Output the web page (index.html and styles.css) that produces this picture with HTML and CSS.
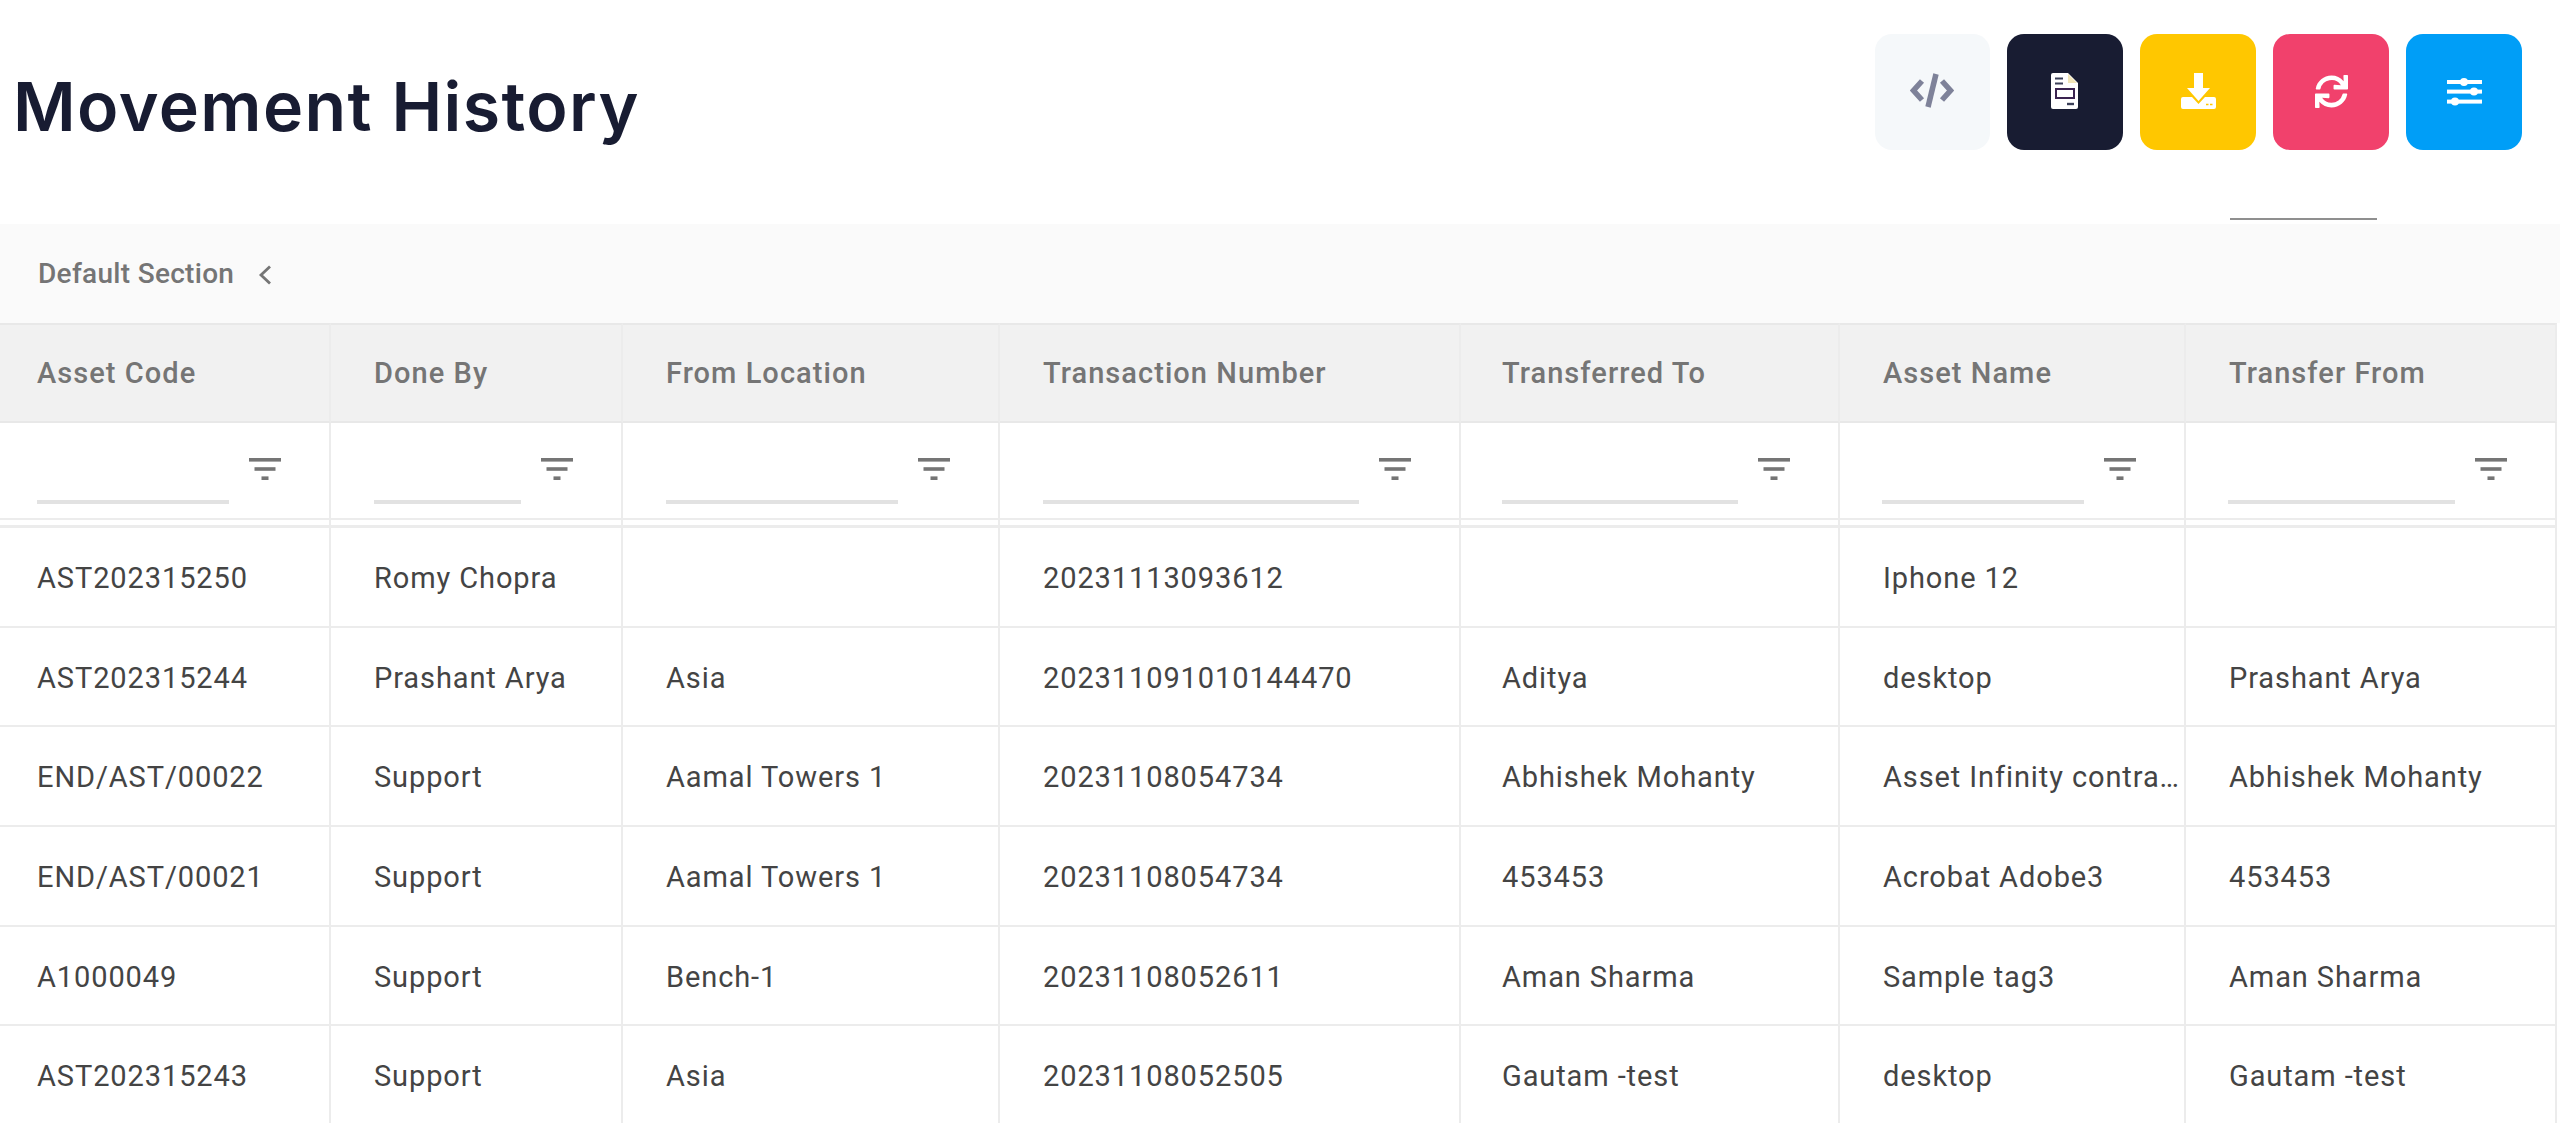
FILE: index.html
```html
<!DOCTYPE html>
<html lang="en">
<head>
<meta charset="utf-8">
<title>Movement History</title>
<link rel="stylesheet" href="styles.css">
</head>
<body>
<svg class="defs" width="0" height="0" aria-hidden="true">
  <symbol id="filter" viewBox="0 0 32 22">
    <rect x="0" y="0" width="32" height="3.6"/>
    <rect x="5.5" y="9.2" width="21" height="3.6"/>
    <rect x="12.5" y="18.4" width="7" height="3.6"/>
  </symbol>
</svg>
<header class="page-head">
  <h1 class="title">Movement History</h1>
  <div class="actions">
    <div class="btn-row">
      <button class="btn btn-light" type="button" aria-label="Code">
        <svg class="ico-code" viewBox="0 0 44 35"><path d="M12 8 3.500 17.500 12 27M32 8l8.500 9.500L32 27" fill="none" stroke="#7e8299" stroke-width="5.500"/><path d="M26 1 18 34" fill="none" stroke="#7e8299" stroke-width="5.500"/></svg>
      </button>
      <button class="btn btn-dark" type="button" aria-label="Document">
        <svg class="ico-doc" viewBox="0 0 27 36"><path d="M2 0h15l10 10v24a2 2 0 0 1-2 2H2a2 2 0 0 1-2-2V2a2 2 0 0 1 2-2z" fill="#fff"/><path d="M17 1v9h9z" fill="#f2e6b8"/><path d="M4 5.500h8M4 10.500h8" stroke="#3a3f58" stroke-width="2"/><rect x="5" y="16" width="18" height="9" fill="#fff" stroke="#3a2350" stroke-width="2"/><path d="M16 31h7" stroke="#3a3f58" stroke-width="2.400"/></svg>
      </button>
      <button class="btn btn-yellow" type="button" aria-label="Download">
        <svg class="ico-down" viewBox="0 0 35 36"><path d="M13 0h9v15h7L17.500 28 6 15h7z" fill="#fff"/><path d="M2 24h9l6.500 7 6.500-7h9a2 2 0 0 1 2 2v8a2 2 0 0 1-2 2H2a2 2 0 0 1-2-2v-8a2 2 0 0 1 2-2z" fill="#fff"/><path d="M25 31.500h2.500M29 31.500h2.500" stroke="#ffc700" stroke-width="1.600"/></svg>
      </button>
      <button class="btn btn-pink" type="button" aria-label="Refresh">
        <svg class="ico-sync" viewBox="0 0 512 512"><path fill="#fff" d="M440.65 12.57l4 82.77A247.16 247.16 0 0 0 255.83 8C134.73 8 33.91 94.92 12.29 209.82A12 12 0 0 0 24.09 224h49.05a12 12 0 0 0 11.67-9.26 175.91 175.91 0 0 1 317-56.94l-101.46-4.86a12 12 0 0 0-12.57 12v47.41a12 12 0 0 0 12 12H500a12 12 0 0 0 12-12V12a12 12 0 0 0-12-12h-47.37a12 12 0 0 0-11.98 12.57zM255.83 432a175.61 175.61 0 0 1-146-77.8l101.8 4.87a12 12 0 0 0 12.57-12v-47.4a12 12 0 0 0-12-12H12a12 12 0 0 0-12 12V500a12 12 0 0 0 12 12h47.35a12 12 0 0 0 12-12.6l-4.15-82.57A247.17 247.17 0 0 0 255.83 504c121.11 0 221.93-86.92 243.55-201.82a12 12 0 0 0-11.8-14.18h-49.05a12 12 0 0 0-11.67 9.26A175.86 175.86 0 0 1 255.83 432z"/></svg>
      </button>
      <button class="btn btn-blue" type="button" aria-label="Settings">
        <svg class="ico-sliders" viewBox="0 0 35 29"><g fill="#fff"><rect x="0" y="3" width="35" height="4"/><circle cx="17" cy="5" r="4"/><rect x="0" y="12.600" width="35" height="4"/><circle cx="27" cy="14.600" r="4"/><rect x="0" y="22.600" width="35" height="4"/><circle cx="8" cy="24.600" r="4"/></g></svg>
      </button>
    </div>
    <div class="tab-line"></div>
  </div>
</header>

<section class="section-bar">
  <span class="section-name">Default Section</span>
  <svg class="chev" viewBox="0 0 14 20"><path d="M12 1.500 3 10l9 8.500" fill="none" stroke="#757575" stroke-width="2.800"/></svg>
</section>

<table class="grid">
  <colgroup>
    <col class="c1"><col class="c2"><col class="c3"><col class="c4"><col class="c5"><col class="c6"><col class="c7">
  </colgroup>
  <thead>
    <tr class="head-row">
      <th class="first">Asset Code</th><th>Done By</th><th>From Location</th><th>Transaction Number</th><th class="tight">Transferred To</th><th>Asset Name</th><th>Transfer From</th>
    </tr>
    <tr class="filter-row">
      <td class="first"><div class="fl"><span class="fl-input"></span><svg class="fl-ico"><use href="#filter"/></svg></div></td>
      <td><div class="fl"><span class="fl-input"></span><svg class="fl-ico"><use href="#filter"/></svg></div></td>
      <td><div class="fl"><span class="fl-input"></span><svg class="fl-ico"><use href="#filter"/></svg></div></td>
      <td><div class="fl"><span class="fl-input"></span><svg class="fl-ico"><use href="#filter"/></svg></div></td>
      <td class="tight"><div class="fl"><span class="fl-input"></span><svg class="fl-ico"><use href="#filter"/></svg></div></td>
      <td class="near"><div class="fl"><span class="fl-input"></span><svg class="fl-ico"><use href="#filter"/></svg></div></td>
      <td class="near"><div class="fl"><span class="fl-input"></span><svg class="fl-ico"><use href="#filter"/></svg></div></td>
    </tr>
    <tr class="gap-row"><td></td><td></td><td></td><td></td><td></td><td></td><td></td></tr>
  </thead>
  <tbody>
    <tr><td class="first">AST202315250</td><td>Romy Chopra</td><td></td><td>20231113093612</td><td class="tight"></td><td>Iphone 12</td><td></td></tr>
    <tr><td class="first">AST202315244</td><td>Prashant Arya</td><td>Asia</td><td>202311091010144470</td><td class="tight">Aditya</td><td>desktop</td><td>Prashant Arya</td></tr>
    <tr><td class="first">END/AST/00022</td><td>Support</td><td>Aamal Towers 1</td><td>20231108054734</td><td class="tight">Abhishek Mohanty</td><td>Asset Infinity contract</td><td>Abhishek Mohanty</td></tr>
    <tr><td class="first">END/AST/00021</td><td>Support</td><td>Aamal Towers 1</td><td>20231108054734</td><td class="tight">453453</td><td>Acrobat Adobe3</td><td>453453</td></tr>
    <tr><td class="first">A1000049</td><td>Support</td><td>Bench-1</td><td>20231108052611</td><td class="tight">Aman Sharma</td><td>Sample tag3</td><td>Aman Sharma</td></tr>
    <tr><td class="first">AST202315243</td><td>Support</td><td>Asia</td><td>20231108052505</td><td class="tight">Gautam -test</td><td>desktop</td><td>Gautam -test</td></tr>
  </tbody>
</table>
</body>
</html>
```
FILE: styles.css
```css
* { box-sizing: border-box; }
html, body { margin: 0; padding: 0; background: #fff; }
body { width: 2560px; height: 1123px; overflow: hidden; font-family: Roboto, "Liberation Sans", sans-serif; }
.defs { position: absolute; }

.page-head { height: 224px; display: flex; justify-content: space-between; align-items: flex-start; padding: 34px 38px 0 13px; }
.title { margin: 24px 0 0; font-family: Inter, "Liberation Sans", sans-serif; font-size: 68px; line-height: 96px; font-weight: 600; letter-spacing: 1.4px; color: #181c32; }

.actions { display: flex; flex-direction: column; align-items: flex-start; }
.btn-row { display: flex; gap: 17px; }
.btn { width: 116px; height: 116px; border: 0; border-radius: 17px; padding: 0; display: flex; align-items: center; justify-content: center; }
.btn-light { background: #f5f8fa; width: 115px; }
.btn-dark { background: #181c32; }
.btn-yellow { background: #ffc700; }
.btn-pink { background: #f1416c; }
.btn-blue { background: #009ef7; }
.ico-code { width: 44px; height: 35px; margin: -3px 2px 0 0; }
.ico-doc { width: 27px; height: 36px; margin: -2px 2px 0 0; }
.ico-down { width: 35px; height: 36px; margin-top: -2px; }
.ico-sync { width: 35px; height: 33px; margin-top: -2px; }
.ico-sliders { width: 35px; height: 29px; margin-top: -1px; }
.tab-line { width: 147px; height: 2px; margin: 68px 0 0 355px; background: #8f8f8f; }

.section-bar { height: 99px; background: #fafafa; display: flex; align-items: center; gap: 24px; padding-left: 38px; }
.section-name { font-size: 28px; font-weight: 500; color: #757575; letter-spacing: 0.3px; }
.chev { width: 14px; height: 20px; margin-top: 3px; }

.grid { width: 2557px; table-layout: fixed; border-collapse: separate; border-spacing: 0; font-size: 29px; letter-spacing: 0.9px; }
.c1 { width: 331px; } .c2 { width: 292px; } .c3 { width: 377px; } .c4 { width: 461px; }
.c5 { width: 379px; } .c6 { width: 346px; } .c7 { width: 371px; }

.grid th, .grid td { padding: 0 2px 0 43px; border-right: 2px solid #ececec; text-align: left; white-space: nowrap; overflow: hidden; text-overflow: ellipsis; }
.grid .first { padding-left: 37px; }
.grid .tight { padding-left: 41px; }
.grid .near { padding-left: 42px; }

.head-row th { height: 100px; background: #f1f1f1; border-top: 2px solid #e8e8e8; border-bottom: 2px solid #e8e8e8; font-weight: 500; color: #757575; letter-spacing: 1.05px; }
.grid .filter-row td { height: 97px; padding-right: 48px; border-bottom: 2px solid #ececec; }
.grid .gap-row td { height: 8px; border-bottom: 3px solid #ececec; padding: 0; }
.grid tbody td { height: 99.7px; padding-top: 2px; border-bottom: 2px solid #ececec; color: #444; }

.fl { display: flex; align-items: flex-start; gap: 20px; height: 83px; }
.fl-input { flex: 1; height: 4px; margin-top: 71px; background: #e2e2e2; }
.fl-ico { flex: none; width: 32px; height: 22px; margin-top: 29px; fill: #757575; }
```
